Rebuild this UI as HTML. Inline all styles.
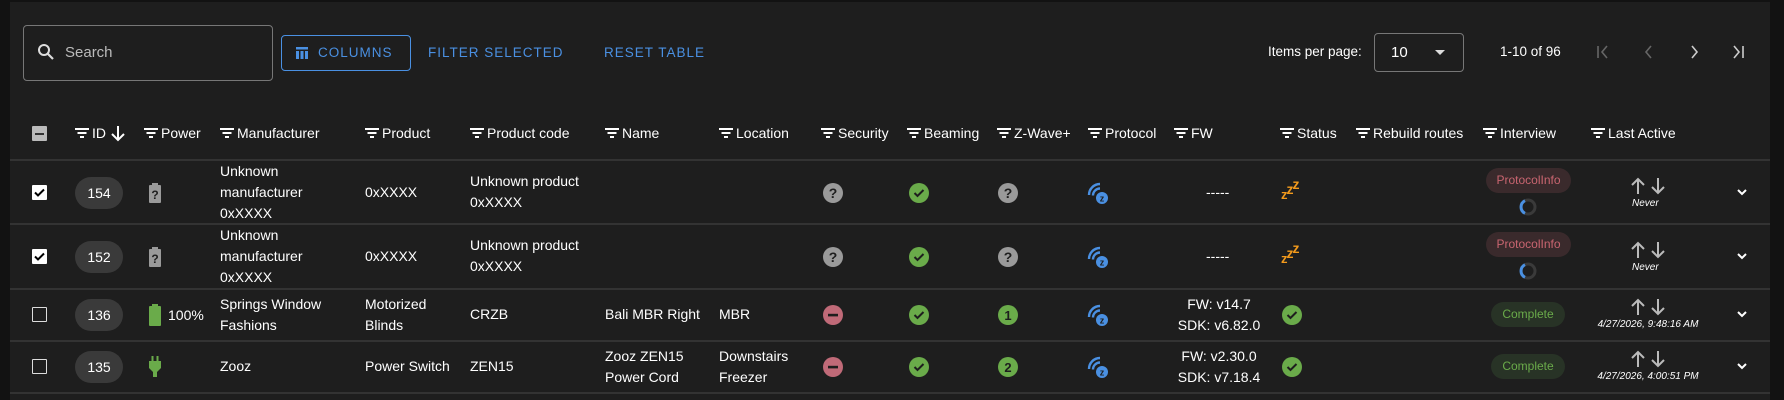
<!DOCTYPE html>
<html><head><meta charset="utf-8"><style>
*{margin:0;padding:0;box-sizing:border-box}
body{width:1784px;height:400px;background:#1e1e1e;font-family:"Liberation Sans",sans-serif;color:#fff;position:relative;overflow:hidden;font-size:14px}
.a{position:absolute;white-space:nowrap}
.sl{left:0;top:0;width:10px;height:400px;background:#121212}
.sr{left:1770px;top:0;width:14px;height:400px;background:#121212}
.tp{left:0;top:0;width:1784px;height:2px;background:#121212}
.line{position:absolute;left:10px;width:1760px;height:2px;background:#333}
.h{top:124px;font-size:14px;line-height:18px;display:flex;align-items:center}
.f{display:inline-block;width:14px;height:10px;margin-right:3px;position:relative}
.f i{position:absolute;height:2px;background:#fff;left:50%;transform:translateX(-50%)}
.t{font-size:14px;line-height:21px}
.badge{width:48px;height:32px;border-radius:16px;background:#3a3a3a;text-align:center;line-height:32px;font-size:14px}
.cb{width:15px;height:15px;border:1.5px solid #ddd;border-radius:1px}
.cbk{width:15px;height:15px;background:#fff;border-radius:1px}
.chip{height:25px;border-radius:13px;font-size:12px;line-height:25px;text-align:center}
.btn{color:#4a90e2;font-size:13.5px;letter-spacing:1px}
</style></head><body>
<div class="a sl"></div><div class="a sr"></div><div class="a tp"></div>

<div class="a" style="left:23px;top:25px;width:250px;height:56px;border:1px solid #777;border-radius:4px"></div>
<svg class="a" style="left:37px;top:43px" width="18" height="18" viewBox="0 0 18 18"><circle cx="7" cy="7" r="5" stroke="#ddd" stroke-width="2" fill="none"/><path d="M11 11l5 5" stroke="#ddd" stroke-width="2.2"/></svg>
<div class="a" style="left:65px;top:44px;font-size:15px;color:#bbb">Search</div>
<div class="a" style="left:281px;top:35px;width:130px;height:36px;border:1px solid #4a90e2;border-radius:4px"></div>
<svg class="a" style="left:296px;top:47px" width="12" height="12"><rect x="0" y="0" width="12" height="2.5" fill="#4a90e2"/><rect x="0" y="4" width="3" height="8" fill="#4a90e2"/><rect x="4.5" y="4" width="3" height="8" fill="#4a90e2"/><rect x="9" y="4" width="3" height="8" fill="#4a90e2"/></svg>
<div class="a btn" style="left:318px;top:45px">COLUMNS</div>
<div class="a btn" style="left:428px;top:45px">FILTER SELECTED</div>
<div class="a btn" style="left:604px;top:45px">RESET TABLE</div>

<div class="a" style="left:1268px;top:44px;font-size:13.5px">Items per page:</div>
<div class="a" style="left:1374px;top:33px;width:90px;height:39px;border:1px solid #777;border-radius:4px"></div>
<div class="a" style="left:1391px;top:44px;font-size:15px">10</div>
<div class="a" style="left:1435px;top:50px;width:0;height:0;border-left:5px solid transparent;border-right:5px solid transparent;border-top:5px solid #ddd"></div>
<div class="a" style="left:1500px;top:44px;font-size:13.5px">1-10 of 96</div>
<svg class="a" style="left:1595px;top:45px" width="160" height="14" fill="none" stroke-width="1.6"><path d="M3 1v12M12 1L7 7l5 6" stroke="#666"/><path d="M56 1l-5 6 5 6" stroke="#666"/><path d="M97 1l5 6-5 6" stroke="#ccc"/><path d="M139 1l5 6-5 6M148 1v12" stroke="#ccc"/></svg>

<div class="a" style="left:32px;top:126px;width:15px;height:15px;background:#bbb;border-radius:1px"><div style="margin:6.5px 3px;height:2px;background:#333"></div></div>
<div id="hdr"></div>
<div class="line" style="top:159px"></div>
<div class="line" style="top:223px"></div>
<div class="line" style="top:288px"></div>
<div class="line" style="top:340px"></div>
<div class="line" style="top:392px"></div>

<script>
function f(){return '<span class="f"><i style="top:0;width:14px"></i><i style="top:4px;width:9px"></i><i style="top:8px;width:4px"></i></span>'}
var H=[[75,'ID'],[144,'Power'],[220,'Manufacturer'],[365,'Product'],[470,'Product code'],[605,'Name'],[719,'Location'],[821,'Security'],[907,'Beaming'],[997,'Z-Wave+'],[1088,'Protocol'],[1174,'FW'],[1280,'Status'],[1356,'Rebuild routes'],[1483,'Interview'],[1591,'Last Active']];
var s='';H.forEach(function(h){s+='<div class="a h" style="left:'+h[0]+'px">'+f()+h[1]+(h[1]=='ID'?'<svg width="18" height="18" style="margin-left:3px" fill="none" stroke="#fff" stroke-width="2"><path d="M9 2v14M3 10l6 6 6-6"/></svg>':'')+'</div>'});
document.getElementById('hdr').outerHTML=s;
</script>

<div id="rows"></div>
<script>
function chk(x,y){return '<svg class="a" style="left:'+(x-10)+'px;top:'+(y-10)+'px" width="20" height="20"><circle cx="10" cy="10" r="10" fill="#6aab4a"/><path d="M5.5 10l3 3 6-6" stroke="#1e1e1e" stroke-width="2" fill="none"/></svg>'}
function q(x,y){return '<svg class="a" style="left:'+(x-10)+'px;top:'+(y-10)+'px" width="20" height="20"><circle cx="10" cy="10" r="10" fill="#9a9a9a"/><text x="10" y="15" font-size="14" font-weight="bold" text-anchor="middle" fill="#1e1e1e" font-family="Liberation Sans">?</text></svg>'}
function minus(x,y){return '<svg class="a" style="left:'+(x-10)+'px;top:'+(y-10)+'px" width="20" height="20"><circle cx="10" cy="10" r="10" fill="#c06a78"/><rect x="5" y="8.8" width="10" height="2.6" fill="#1e1e1e"/></svg>'}
function num(x,y,n){return '<svg class="a" style="left:'+(x-10)+'px;top:'+(y-10)+'px" width="20" height="20"><circle cx="10" cy="10" r="10" fill="#6aab4a"/><text x="10" y="15" font-size="13" font-weight="bold" text-anchor="middle" fill="#1e1e1e" font-family="Liberation Sans">'+n+'</text></svg>'}
function zw(x,y){return '<svg class="a" style="left:'+(x-12)+'px;top:'+(y-12)+'px" width="24" height="24" fill="none"><path d="M3 14a11 11 0 0 1 11-11M7 14.5a7 7 0 0 1 7-7" stroke="#4a90e2" stroke-width="2.4"/><circle cx="16" cy="17" r="6" fill="#4a90e2"/><text x="16" y="20.5" font-size="9" font-weight="bold" text-anchor="middle" fill="#1e1e1e" font-family="Liberation Sans">z</text></svg>'}
function zzz(x,y){return '<div class="a" style="left:'+(x-11)+'px;top:'+(y-14)+'px;color:#f39a1c;font-weight:bold;font-family:Liberation Sans;letter-spacing:-1px"><span style="font-size:13px;position:relative;top:7px">z</span><span style="font-size:14px;position:relative;top:2px">z</span><span style="font-size:14px;position:relative;top:-3px">z</span></div>'}
function arrows(x,y){return '<svg class="a" style="left:'+(x-18)+'px;top:'+(y-9)+'px" width="36" height="18" fill="none" stroke="#bbb" stroke-width="2"><path d="M8 17V2M2 8l6-6 6 6"/><path d="M28 1v15M22 10l6 6 6-6"/></svg>'}
function chev(y){return '<svg class="a" style="left:1736px;top:'+(y-4)+'px" width="12" height="8" fill="none" stroke="#fff" stroke-width="2"><path d="M2 1l4 4 4-4"/></svg>'}
function bat(y){return '<svg class="a" style="left:149px;top:'+(y-10)+'px" width="12" height="20"><rect x="3" y="0" width="6" height="3" fill="#9a9a9a"/><rect x="0" y="2" width="12" height="18" rx="1" fill="#9a9a9a"/><text x="6" y="16" font-size="12" font-weight="bold" text-anchor="middle" fill="#1e1e1e" font-family="Liberation Sans">?</text></svg>'}
var o='';
[[193,'154'],[257,'152']].forEach(function(r){var y=r[0];
o+='<div class="a cbk" style="left:32px;top:'+(y-8)+'px"><svg width="15" height="15"><path d="M3 7.5l3 3 6-6" stroke="#000" stroke-width="2" fill="none"/></svg></div>';
o+='<div class="a badge" style="left:75px;top:'+(y-16)+'px">'+r[1]+'</div>'+bat(y);
o+='<div class="a t" style="left:220px;top:'+(y-32)+'px">Unknown<br>manufacturer<br>0xXXXX</div>';
o+='<div class="a t" style="left:365px;top:'+(y-11)+'px">0xXXXX</div>';
o+='<div class="a t" style="left:470px;top:'+(y-22)+'px">Unknown product<br>0xXXXX</div>';
o+=q(833,y)+chk(919,y)+q(1008,y)+zw(1098,y)+'<div class="a t" style="left:1206px;top:'+(y-11)+'px">-----</div>'+zzz(1292,y);
o+='<div class="a chip" style="left:1486px;top:'+(y-25)+'px;width:85px;background:#3a2a2c;color:#c96570">ProtocolInfo</div>';
o+='<svg class="a" style="left:1519px;top:'+(y+5)+'px" width="18" height="18" fill="none" stroke-width="3"><circle cx="9" cy="9" r="7" stroke="#3a3a3a"/><path d="M6 2.7A7 7 0 0 0 6 15.3" stroke="#4a90e2"/></svg>';
o+=arrows(1648,y-7)+'<div class="a" style="left:1632px;top:'+(y+5)+'px;font-size:10px;font-style:italic">Never</div>'+chev(y);
});
var y=315;
o+='<div class="a cb" style="left:32px;top:'+(y-8)+'px"></div><div class="a badge" style="left:75px;top:'+(y-16)+'px">136</div>';
o+='<svg class="a" style="left:149px;top:'+(y-11)+'px" width="12" height="22"><rect x="3" y="0" width="6" height="3" fill="#6aab4a"/><rect x="0" y="2" width="12" height="20" rx="1" fill="#6aab4a"/></svg><div class="a t" style="left:168px;top:'+(y-10)+'px">100%</div>';
o+='<div class="a t" style="left:220px;top:'+(y-21)+'px">Springs Window<br>Fashions</div><div class="a t" style="left:365px;top:'+(y-21)+'px">Motorized<br>Blinds</div><div class="a t" style="left:470px;top:'+(y-11)+'px">CRZB</div><div class="a t" style="left:605px;top:'+(y-11)+'px">Bali MBR Right</div><div class="a t" style="left:719px;top:'+(y-11)+'px">MBR</div>';
o+=minus(833,y)+chk(919,y)+num(1008,y,'1')+zw(1098,y)+'<div class="a t" style="left:1174px;top:'+(y-21)+'px;width:90px;text-align:center">FW: v14.7<br>SDK: v6.82.0</div>'+chk(1292,y);
o+='<div class="a chip" style="left:1491px;top:'+(y-13)+'px;width:74px;background:#283326;color:#6aab4a">Complete</div>'+arrows(1648,y-8)+'<div class="a" style="left:1586px;top:'+(y+4)+'px;width:124px;text-align:center;font-size:10px;font-style:italic">4/27/2026, 9:48:16 AM</div>'+chev(y);
y=367;
o+='<div class="a cb" style="left:32px;top:'+(y-8)+'px"></div><div class="a badge" style="left:75px;top:'+(y-16)+'px">135</div>';
o+='<svg class="a" style="left:149px;top:'+(y-11)+'px" width="12" height="22"><rect x="2.5" y="0" width="2" height="6" fill="#6aab4a"/><rect x="7.5" y="0" width="2" height="6" fill="#6aab4a"/><path d="M0 5h12v7l-4 4v5h-4v-5l-4-4z" fill="#6aab4a"/></svg>';
o+='<div class="a t" style="left:220px;top:'+(y-11)+'px">Zooz</div><div class="a t" style="left:365px;top:'+(y-11)+'px">Power Switch</div><div class="a t" style="left:470px;top:'+(y-11)+'px">ZEN15</div><div class="a t" style="left:605px;top:'+(y-21)+'px">Zooz ZEN15<br>Power Cord</div><div class="a t" style="left:719px;top:'+(y-21)+'px">Downstairs<br>Freezer</div>';
o+=minus(833,y)+chk(919,y)+num(1008,y,'2')+zw(1098,y)+'<div class="a t" style="left:1174px;top:'+(y-21)+'px;width:90px;text-align:center">FW: v2.30.0<br>SDK: v7.18.4</div>'+chk(1292,y);
o+='<div class="a chip" style="left:1491px;top:'+(y-13)+'px;width:74px;background:#283326;color:#6aab4a">Complete</div>'+arrows(1648,y-8)+'<div class="a" style="left:1586px;top:'+(y+4)+'px;width:124px;text-align:center;font-size:10px;font-style:italic">4/27/2026, 4:00:51 PM</div>'+chev(y);
document.getElementById('rows').outerHTML=o;
</script>
</body></html>
